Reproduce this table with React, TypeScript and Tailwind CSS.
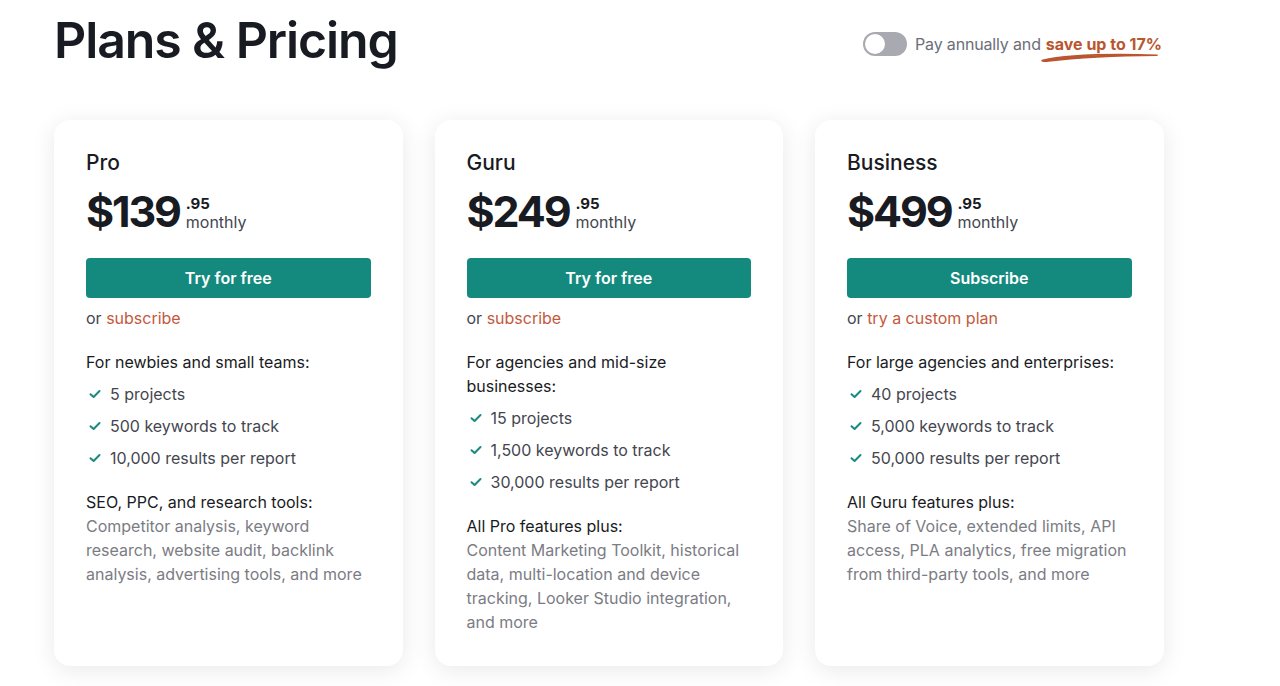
import React from "react";

type Plan = {
  name: string;
  price: string;
  cta: string;
  orText: string;
  audience: string;
  features: string[];
  extraTitle: string;
  extraText: string;
};

const plans: Plan[] = [
  {
    name: "Pro",
    price: "$139",
    cta: "Try for free",
    orText: "subscribe",
    audience: "For newbies and small teams:",
    features: ["5 projects", "500 keywords to track", "10,000 results per report"],
    extraTitle: "SEO, PPC, and research tools:",
    extraText:
      "Competitor analysis, keyword research, website audit, backlink analysis, advertising tools, and more",
  },
  {
    name: "Guru",
    price: "$249",
    cta: "Try for free",
    orText: "subscribe",
    audience: "For agencies and mid-size businesses:",
    features: ["15 projects", "1,500 keywords to track", "30,000 results per report"],
    extraTitle: "All Pro features plus:",
    extraText:
      "Content Marketing Toolkit, historical data, multi-location and device tracking, Looker Studio integration, and more",
  },
  {
    name: "Business",
    price: "$499",
    cta: "Subscribe",
    orText: "try a custom plan",
    audience: "For large agencies and enterprises:",
    features: ["40 projects", "5,000 keywords to track", "50,000 results per report"],
    extraTitle: "All Guru features plus:",
    extraText:
      "Share of Voice, extended limits, API access, PLA analytics, free migration from third-party tools, and more",
  },
];

function Check() {
  return (
    <svg width="14" height="14" viewBox="0 0 14 14" fill="none" className="shrink-0">
      <path d="M2.5 7.2 L5.6 10 L11.5 4" stroke="#1a8a80" strokeWidth="2" strokeLinecap="round" strokeLinejoin="round" />
    </svg>
  );
}

function Card({ p }: { p: Plan }) {
  return (
    <div className="w-[348.5px] h-[546px] bg-white rounded-[16px] shadow-[0_4px_24px_rgba(0,0,0,0.09)] px-8 pt-[30px]">
      <div className="text-[21px] font-medium text-[#191b23] leading-[26px]">{p.name}</div>
      <div className="flex items-start mt-[10px] h-[50px]">
        <span className="text-[43px] font-bold tracking-[-0.05em] leading-[50px] text-[#191b23]">{p.price}</span>
        <div className="ml-[6px] mt-[10px] flex flex-col">
          <span className="text-[15px] font-bold leading-[16px] text-[#191b23]">.95</span>
          <span className="text-[16px] leading-[20px] text-[#44464f]">monthly</span>
        </div>
      </div>
      <button className="mt-[22px] w-full h-[40px] rounded-[4px] bg-[#148a7e] text-white text-[16px] font-semibold">
        {p.cta}
      </button>
      <div className="mt-[8px] text-[16px] leading-[24px] text-[#44464f]">
        or <span className="text-[#c4593d]">{p.orText}</span>
      </div>
      <div className="mt-[20px] text-[16px] leading-[24px] text-[#191b23]">{p.audience}</div>
      <ul className="mt-[8px] flex flex-col gap-[8px]">
        {p.features.map((f) => (
          <li key={f} className="flex items-center gap-[8px] pl-[2px] text-[16px] leading-[24px] text-[#44464f]">
            <Check />
            <span>{f}</span>
          </li>
        ))}
      </ul>
      <div className="mt-[20px] text-[16px] leading-[24px] text-[#191b23]">{p.extraTitle}</div>
      <div className="text-[16px] leading-[24px] text-[#7b7c84]">{p.extraText}</div>
    </div>
  );
}

export default function App() {
  return (
    <div
      className="w-[1280px] h-[686px] bg-white overflow-hidden"
      style={{ fontFamily: "Inter, 'Noto Sans', sans-serif" }}
    >
      <div className="flex items-start pl-[54px] pr-[118px] pt-[10px]">
        <h1 className="text-[50px] font-semibold tracking-[-0.022em] leading-[60px] text-[#191b23]">
          Plans &amp; Pricing
        </h1>
        <div className="ml-auto mt-[22px] flex items-center">
          <div className="w-[44px] h-[24px] rounded-full bg-[#a8a9b1] p-[2px] flex items-center">
            <div className="w-[20px] h-[20px] rounded-full bg-white" />
          </div>
          <span className="ml-[8px] text-[16px] tracking-[-0.01em] text-[#6c6e79]">Pay annually and</span>
          <span className="ml-[5px] relative text-[16px] font-bold text-[#b9562f]">
            save up to 17%
            <svg
              className="absolute left-[-5px] top-[20px]"
              width="118"
              height="10"
              viewBox="0 0 118 10"
              fill="none"
            >
              <path
                d="M1 8.5 C 20 4, 60 1.5, 116 3.2 C 80 3.5, 40 5, 3 9.5 Z"
                fill="#b9562f"
                stroke="#b9562f"
                strokeWidth="1.6"
                strokeLinejoin="round"
              />
            </svg>
          </span>
        </div>
      </div>
      <div className="flex gap-[32px] pl-[54px] mt-[50px]">
        {plans.map((p) => (
          <Card key={p.name} p={p} />
        ))}
      </div>
    </div>
  );
}
